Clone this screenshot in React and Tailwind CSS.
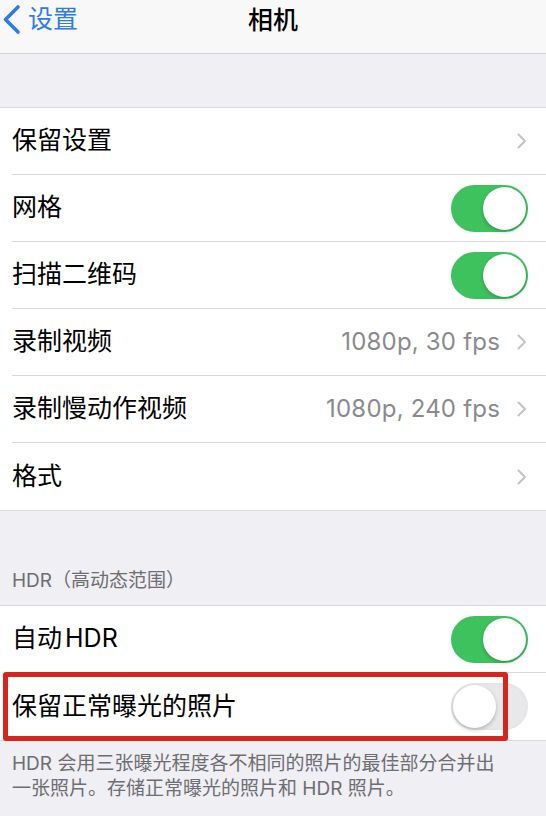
import React from "react";

const FONT = { fontFamily: 'Inter, "Noto Sans CJK SC", sans-serif' };

function Toggle({ on }) {
  return on ? (
    <div className="relative h-[47px] w-[77px] shrink-0 rounded-full bg-[#3ec25e]">
      <div className="absolute right-[2px] top-[2px] h-[43px] w-[43px] rounded-full bg-white shadow-[0_2px_4px_rgba(0,0,0,0.2)]" />
    </div>
  ) : (
    <div className="relative h-[47px] w-[77px] shrink-0 rounded-full bg-[#e8e8ea] border-[2px] border-[#e5e5e7]">
      <div className="absolute left-0 top-0 h-[43px] w-[43px] rounded-full bg-white shadow-[0_2px_4px_rgba(0,0,0,0.22)]" />
    </div>
  );
}

function Chevron() {
  return (
    <svg width="12" height="16" viewBox="0 0 12 16" className="shrink-0">
      <path d="M2.5 1.5 L9 8 L2.5 14.5" fill="none" stroke="#c4c4c8" strokeWidth="2" strokeLinecap="round" strokeLinejoin="round" />
    </svg>
  );
}

function Row({ label, value, toggle, chevron, last }) {
  return (
    <div className="flex h-[67px] items-stretch bg-white pl-[12px]">
      <div className={"flex flex-1 items-center justify-between pr-[18px] " + (last ? "" : "border-b border-[#d9d9dd]")}>
        <span className="text-[25px] text-black">{label}</span>
        <div className="flex items-center gap-[16px]">
          {value && <span className="text-[24px] tracking-[0.2px] text-[#8a8a8e]">{value}</span>}
          {chevron && <Chevron />}
          {toggle !== undefined && <Toggle on={toggle} />}
        </div>
      </div>
    </div>
  );
}

export default function App() {
  return (
    <div className="w-[546px] h-[816px] overflow-hidden bg-[#efeff4]" style={FONT}>
      {/* Nav bar */}
      <div className="relative flex h-[54px] items-center pb-[14px] border-b border-[#d3d3d6] bg-[#f8f8f8]">
        <div className="flex items-center pl-[2px]">
          <svg width="19" height="31" viewBox="0 0 19 31">
            <path d="M16 3 L3.5 15.5 L16 28" fill="none" stroke="#2f7be8" strokeWidth="3.6" strokeLinecap="round" strokeLinejoin="round" />
          </svg>
          <span className="ml-[7px] text-[25px] text-[#2f7be8]">设置</span>
        </div>
        <div className="absolute left-0 right-0 top-[2px] text-center text-[25px] font-medium text-black pointer-events-none">相机</div>
      </div>

      <div className="h-[53px]" />

      <div className="border-t border-[#d9d9dd] border-b">
        <Row label="保留设置" chevron />
        <Row label="网格" toggle={true} />
        <Row label="扫描二维码" toggle={true} />
        <Row label="录制视频" value="1080p, 30 fps" chevron />
        <Row label="录制慢动作视频" value="1080p, 240 fps" chevron />
        <Row label="格式" chevron last />
      </div>

      <div className="flex h-[94px] items-end pl-[12px] pb-[10px]">
        <span className="text-[19px] text-[#6d6d72]">HDR（高动态范围）</span>
      </div>

      <div className="border-t border-b border-[#d9d9dd]">
        <Row label={<>自动<span className="ml-[3px]">HDR</span></>} toggle={true} />
        <div className="relative">
          <Row label="保留正常曝光的照片" toggle={false} last />
          <div className="absolute left-[3px] top-[-1px] h-[69px] w-[505px] rounded-[3px] border-[5px] border-[#d7251d] pointer-events-none" />
        </div>
      </div>

      <div className="px-[12px] pt-[10px] text-[19px] leading-[25px] text-[#6d6d72]">
        HDR 会用三张曝光程度各不相同的照片的最佳部分合并出
        <br />
        一张照片。存储正常曝光的照片和 HDR 照片。
      </div>
    </div>
  );
}
